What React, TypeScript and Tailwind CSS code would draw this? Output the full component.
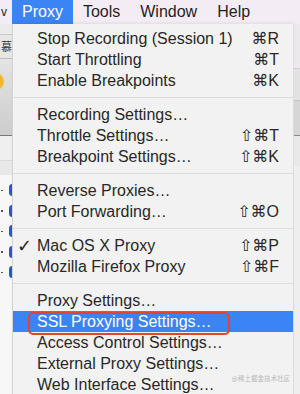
import React from "react";

type Item = {
  label: string;
  keys?: string;
  checked?: boolean;
  active?: boolean;
};

const groups: Item[][] = [
  [
    { label: "Stop Recording (Session 1)", keys: "⌘R" },
    { label: "Start Throttling", keys: "⌘T" },
    { label: "Enable Breakpoints", keys: "⌘K" },
  ],
  [
    { label: "Recording Settings…" },
    { label: "Throttle Settings…", keys: "⇧⌘T" },
    { label: "Breakpoint Settings…", keys: "⇧⌘K" },
  ],
  [
    { label: "Reverse Proxies…" },
    { label: "Port Forwarding…", keys: "⇧⌘O" },
  ],
  [
    { label: "Mac OS X Proxy", keys: "⇧⌘P", checked: true },
    { label: "Mozilla Firefox Proxy", keys: "⇧⌘F" },
  ],
  [
    { label: "Proxy Settings…" },
    { label: "SSL Proxying Settings…", active: true },
    { label: "Access Control Settings…" },
    { label: "External Proxy Settings…" },
    { label: "Web Interface Settings…" },
  ],
];

const font = { fontFamily: '"Liberation Sans", "DejaVu Sans", Arial, sans-serif' };

function Row({ item }: { item: Item }) {
  return (
    <div
      className={`relative flex h-[21px] items-center pr-[14px] ${
        item.active ? "bg-[#3b84f6] text-white" : "text-[#282828]"
      }`}
    >
      <span className="w-[24px] pl-[4px] text-[18px] font-bold leading-none" style={{ fontFamily: '"DejaVu Sans", sans-serif' }}>
        {item.checked ? "✓" : ""}
      </span>
      <span className="flex-1 whitespace-nowrap">{item.label}</span>
      {item.keys && <span className="whitespace-nowrap">{item.keys}</span>}
      {item.active && (
        <div className="absolute left-[15px] top-[1px] h-[23px] w-[202px] rounded-[5px] border-2 border-[#e2452d]" />
      )}
    </div>
  );
}

function LeftStrip() {
  const dots = [0, 1, 2, 3, 4];
  return (
    <div className="flex w-[12px] flex-col overflow-hidden">
      <div className="h-[10px] bg-[#ebebeb]" />
      <div className="h-px bg-[#c9c9c9]" />
      <div className="flex h-[23px] items-center justify-end bg-[#e6e6e6] text-[11px] leading-none text-[#333]" style={{ fontFamily: '"Noto Sans CJK SC", sans-serif' }}>
        <span>慕</span>
      </div>
      <div className="h-px bg-[#bdbdbd]" />
      <div className="flex h-[76px] flex-col bg-gradient-to-b from-[#e4e4e4] to-[#cdcdcd] pt-[14px]">
        <div className="-ml-[13px] h-[17px] w-[17px] rounded-full bg-[#f4b730]" />
      </div>
      <div className="h-px bg-[#767676]" />
      <div className="h-[24px] bg-[#efefef]" />
      <div className="h-px bg-[#dadada]" />
      <div className="h-[14px] bg-[#e8e8e8]" />
      <div className="flex flex-1 flex-col bg-[#f7f7f7] pt-[5px]">
        {dots.map((d) => (
          <div key={d} className="flex h-[20.5px] items-center justify-between">
            <div className="ml-[1px] h-[1.5px] w-[2px] bg-[#555]" />
            <div className="-mr-[4px] h-[12px] w-[7px] rounded-full bg-[#2b58c8]" />
          </div>
        ))}
      </div>
    </div>
  );
}

function RightStrip() {
  return (
    <div className="flex flex-1 flex-col border-l border-[#dcdcdc]">
      <div className="h-[44px] bg-[#ebe9eb]" />
      <div className="h-px bg-[#cfcfcf]" />
      <div className="h-[31px] bg-[#e2e2e2]" />
      <div className="h-px bg-[#c4c4c4]" />
      <div className="h-[34px] bg-[#d6d6d6]" />
      <div className="h-px bg-[#8a8a8a]" />
      <div className="h-[30px] bg-[#e9e9e9]" />
      <div className="flex-1 bg-[#eeeeee]" />
    </div>
  );
}

export default function App() {
  return (
    <div className="relative flex h-[394px] w-[300px] flex-col overflow-hidden bg-[#ededed] text-[16px]" style={font}>
      <div className="flex h-[24px] items-center bg-[#f4ecf4] text-[16px] text-[#1f1f1f]">
        <div className="flex h-full w-[12px] items-center pl-[1px] text-[12px] leading-none">
          <span>v</span>
        </div>
        <div className="flex h-full items-center bg-[#3b84f6] px-[10px] text-white">Proxy</div>
        <div className="px-[10px]">Tools</div>
        <div className="px-[10px]">Window</div>
        <div className="px-[10px]">Help</div>
      </div>
      <div className="flex flex-1">
        <LeftStrip />
        <div className="flex w-[281px] flex-col border-l border-[#d4d4d4] bg-[#f2f2f2] pt-[4px] shadow-[2px_0_4px_rgba(0,0,0,0.12)]">
          {groups.map((g, gi) => (
            <div key={gi}>
              {gi > 0 && (
                <div className="flex h-[13px] items-center">
                  <div className="h-px w-full bg-[#dcdcdc]" />
                </div>
              )}
              {g.map((item) => (
                <Row key={item.label} item={item} />
              ))}
            </div>
          ))}
        </div>
        <RightStrip />
      </div>
      <div
        className="absolute bottom-[13px] right-[10px] whitespace-nowrap text-[6.5px] leading-none text-[#b8b8b8]"
        style={{ fontFamily: '"Noto Sans CJK SC", sans-serif' }}
      >
        @稀土掘金技术社区
      </div>
    </div>
  );
}
